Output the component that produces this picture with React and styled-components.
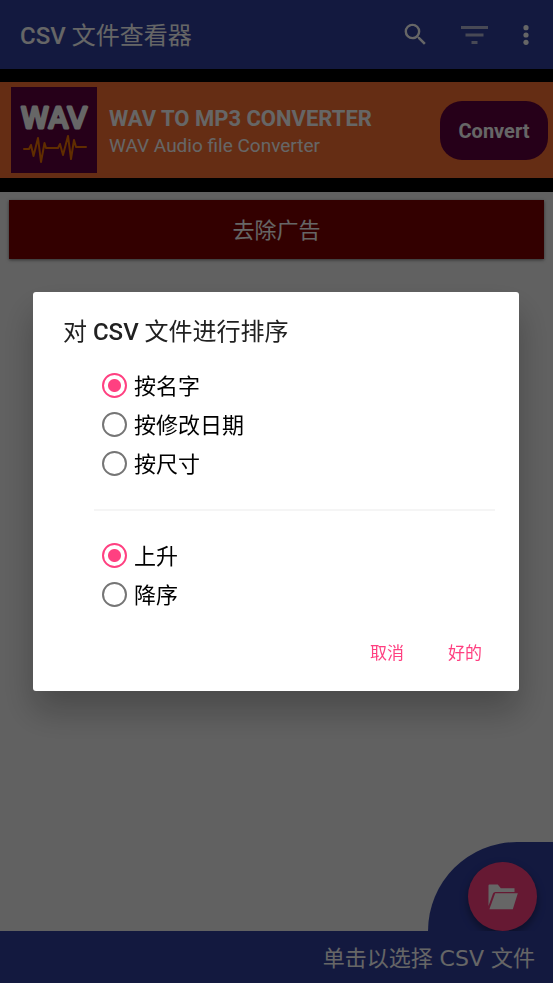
import React, { useState } from "react";
import styled, { createGlobalStyle } from "styled-components";

const sortFields = [
  { value: "name", label: "按名字" },
  { value: "date", label: "按修改日期" },
  { value: "size", label: "按尺寸" },
];

const sortOrders = [
  { value: "asc", label: "上升" },
  { value: "desc", label: "降序" },
];

function RadioList({ name, legend, options, value, onChange }) {
  return (
    <RadioGroup role="radiogroup" aria-label={legend}>
      {options.map((option) => (
        <RadioRow key={option.value} htmlFor={`${name}-${option.value}`}>
          <Radio
            type="radio"
            id={`${name}-${option.value}`}
            name={name}
            value={option.value}
            checked={value === option.value}
            onChange={() => onChange(option.value)}
          />
          <RadioText>{option.label}</RadioText>
        </RadioRow>
      ))}
    </RadioGroup>
  );
}

function WavLogo() {
  return (
    <Logo viewBox="0 0 86 86" aria-hidden="true">
      <rect width="86" height="86" fill="#5f003f" />
      <LogoText x="43" y="41" textAnchor="middle">
        WAV
      </LogoText>
      <path
        d="M13 62h5l2-4 2.500 11L27 51l3 24 3.500-19 1.500 5h12l2-4 3 11 5-19 3 23 3-19 2 7h10"
        fill="none"
        stroke="#ef7000"
        strokeWidth="2"
        strokeLinecap="round"
        strokeLinejoin="round"
      />
    </Logo>
  );
}

export default function App() {
  const [isDialogOpen, setIsDialogOpen] = useState(true);
  const [field, setField] = useState("name");
  const [order, setOrder] = useState("asc");

  const openDialog = () => {
    setIsDialogOpen(true);
  };

  const closeDialog = () => {
    setIsDialogOpen(false);
  };

  return (
    <>
      <GlobalStyle />
      <Page>
        <Toolbar>
          <AppTitle>
            <Latin>CSV</Latin> 文件查看器
          </AppTitle>
          <ToolbarActions>
            <IconButton aria-label="搜索">
              <svg width="29" height="29" viewBox="0 0 24 24" fill="#fff">
                <path d="M15.500 14h-.79l-.28-.27A6.471 6.471 0 0 0 16 9.500 6.500 6.500 0 1 0 9.500 16c1.610 0 3.090-.59 4.230-1.570l.27.28v.79l5 4.990L20.490 19l-4.990-5zm-6 0C7.010 14 5 11.990 5 9.500S7.010 5 9.500 5 14 7.010 14 9.500 11.990 14 9.500 14z" />
              </svg>
            </IconButton>
            <IconButton aria-label="排序" onClick={openDialog}>
              <svg width="28" height="20" viewBox="0 0 28 20" fill="#b4b7d4">
                <rect x="0" y="1" width="27" height="3" />
                <rect x="4.500" y="8.500" width="18" height="3" />
                <rect x="10.500" y="16" width="6" height="3" />
              </svg>
            </IconButton>
            <IconButton aria-label="更多" $narrow>
              <svg width="6" height="20" viewBox="0 0 6 20" fill="#fff">
                <circle cx="3" cy="2.700" r="2.600" />
                <circle cx="3" cy="10" r="2.600" />
                <circle cx="3" cy="17.300" r="2.600" />
              </svg>
            </IconButton>
          </ToolbarActions>
        </Toolbar>
        <Banner>
          <WavLogo />
          <BannerText>
            <BannerTitle>WAV TO MP3 CONVERTER</BannerTitle>
            <BannerSubtitle>WAV Audio file Converter</BannerSubtitle>
          </BannerText>
          <ConvertButton>Convert</ConvertButton>
        </Banner>
        <Content>
          <RemoveAdsButton>去除广告</RemoveAdsButton>
        </Content>
        <FabTab>
          <Fab aria-label="打开文件">
            <svg width="30" height="26" viewBox="0 0 30 26" fill="#fff">
              <path d="M.5 22V1.500Q.5.500 1.500.500h8.300l3 3.800h13.700V8H7.300Q5.600 8 5 9.500z" />
              <path d="M7.200 9.300H29.800L24.800 25.300H1.400z" />
            </svg>
          </Fab>
        </FabTab>
        <Footer>单击以选择 CSV 文件</Footer>
      </Page>
      {isDialogOpen && (
        <Scrim>
          <Dialog role="dialog" aria-modal="true" aria-labelledby="sort-title">
            <DialogTitle id="sort-title">
              对 <Latin>CSV</Latin> 文件进行排序
            </DialogTitle>
            <RadioList
              name="field"
              legend="排序"
              options={sortFields}
              value={field}
              onChange={setField}
            />
            <Divider />
            <RadioList
              name="order"
              legend="顺序"
              options={sortOrders}
              value={order}
              onChange={setOrder}
            />
            <DialogActions>
              <TextButton onClick={closeDialog}>取消</TextButton>
              <TextButton onClick={closeDialog}>好的</TextButton>
            </DialogActions>
          </Dialog>
        </Scrim>
      )}
    </>
  );
}

const GlobalStyle = createGlobalStyle`
  * {
    box-sizing: border-box;
  }

  body {
    margin: 0;
    font-family: Roboto, "Noto Sans CJK SC", sans-serif;
  }

  button {
    border: 0;
    padding: 0;
    background: none;
    font-family: inherit;
    cursor: pointer;
  }
`;

const Page = styled.div`
  min-height: 100vh;
  display: flex;
  flex-direction: column;
  background: #f2f2f2;
`;

const Toolbar = styled.header`
  height: 69px;
  padding: 0 6px 0 20px;
  display: flex;
  align-items: center;
  justify-content: space-between;
  background: #303f9f;
`;

const AppTitle = styled.h1`
  margin: 0;
  padding-top: 2px;
  font-size: 24px;
  font-weight: 400;
  line-height: 32px;
  color: #fff;
`;

const Latin = styled.span`
  font-weight: 500;
`;

const ToolbarActions = styled.div`
  display: flex;
`;

const IconButton = styled.button`
  width: ${(props) => (props.$narrow ? "42px" : "60px")};
  height: 60px;
  display: flex;
  align-items: center;
  justify-content: center;
`;

const Banner = styled.section`
  padding: 5px 5px 5px 11px;
  display: flex;
  align-items: center;
  gap: 12px;
  background: #fc7032;
  border-top: 13px solid #000;
  border-bottom: 14px solid #000;
`;

const Logo = styled.svg`
  width: 86px;
  height: 86px;
  flex-shrink: 0;
`;

const LogoText = styled.text`
  font-family: "DejaVu Sans", sans-serif;
  font-size: 28px;
  font-kerning: none;
  fill: #fff;
  stroke: #fff;
  stroke-width: 3px;
  stroke-linejoin: round;
`;

const BannerText = styled.div`
  flex: 1;
  padding-top: 4px;
  color: #fff;
`;

const BannerTitle = styled.h2`
  margin: 0;
  font-size: 22px;
  font-weight: 700;
  line-height: 28px;
`;

const BannerSubtitle = styled.p`
  margin: 0;
  font-size: 19px;
  line-height: 26px;
`;

const ConvertButton = styled.button`
  width: 108px;
  height: 59px;
  padding-top: 2px;
  border-radius: 22px;
  background: #5f003f;
  color: #fff;
  font-size: 20px;
  font-weight: 700;
`;

const Content = styled.main`
  flex: 1;
  padding: 8px 9px;
`;

const RemoveAdsButton = styled.button`
  width: 100%;
  height: 59px;
  padding-bottom: 4px;
  background: #800000;
  color: #fff;
  font-size: 22px;
  box-shadow: 0 1px 3px rgba(0, 0, 0, 0.5);
`;

const FabTab = styled.div`
  width: 125px;
  padding: 20px 16px 0 0;
  display: flex;
  align-self: flex-end;
  justify-content: flex-end;
  background: #303f9f;
  border-top-left-radius: 89px;
`;

const Fab = styled.button`
  width: 69px;
  height: 69px;
  display: flex;
  align-items: center;
  justify-content: center;
  border-radius: 50%;
  background: #ff4081;
  box-shadow: 0 4px 8px rgba(0, 0, 0, 0.4);
`;

const Footer = styled.footer`
  padding: 12px 18px 8px;
  background: #303f9f;
  color: #fff;
  font-family: "DejaVu Sans", "Noto Sans CJK SC", sans-serif;
  font-size: 22px;
  line-height: 32px;
  text-align: right;
`;

const Scrim = styled.div`
  position: fixed;
  inset: 0;
  padding: 0 34px 0 33px;
  display: flex;
  align-items: center;
  background: rgba(0, 0, 0, 0.6);
`;

const Dialog = styled.div`
  flex: 1;
  padding: 24px 17px 16px 30px;
  background: #fff;
  border-radius: 3px;
  box-shadow: 0 20px 34px rgba(0, 0, 0, 0.25);
`;

const DialogTitle = styled.h2`
  margin: 0 0 18px;
  font-size: 24px;
  font-weight: 400;
  line-height: 32px;
  color: #212121;
`;

const RadioGroup = styled.div`
  padding-left: 39px;
`;

const RadioRow = styled.label`
  height: 39px;
  display: flex;
  align-items: center;
  gap: 7px;
  font-size: 22px;
  color: #000;
`;

const RadioText = styled.span`
  padding-bottom: 4px;
`;

const Radio = styled.input`
  appearance: none;
  width: 25px;
  height: 25px;
  margin: 0;
  border: 2px solid #757575;
  border-radius: 50%;

  &:checked {
    border-color: #ff4081;
    background: radial-gradient(circle, #ff4081 6px, transparent 7px);
  }
`;

const Divider = styled.hr`
  height: 2px;
  margin: 26px 7px 25px 31px;
  border: 0;
  background: #f5f5f5;
`;

const DialogActions = styled.div`
  margin-top: 13px;
  display: flex;
  justify-content: flex-end;
  gap: 4px;
`;

const TextButton = styled.button`
  width: 74px;
  height: 48px;
  font-size: 17px;
  color: #ff4081;
`;
